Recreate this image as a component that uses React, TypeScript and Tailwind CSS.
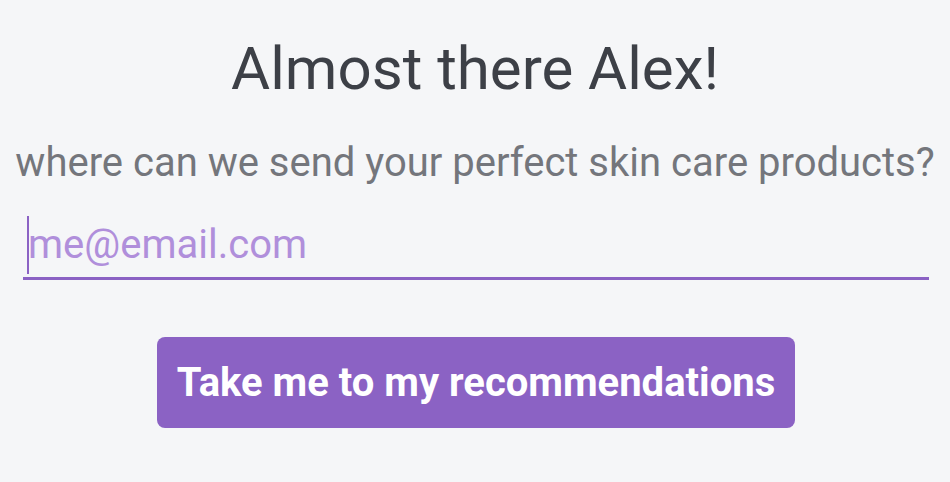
export default function App() {
  return (
    <div
      className="min-h-[482px] bg-[#f5f6f8] flex flex-col items-center pt-[33px]"
      style={{ fontFamily: "Roboto, 'Liberation Sans', sans-serif" }}
    >
      <h1 className="text-[60px] leading-[72px] text-[#3d4047]">Almost there Alex!</h1>
      <p className="mt-[34px] text-[40px] leading-[48px] text-[#74767c] whitespace-nowrap">
        where can we send your perfect skin care products?
      </p>
      <div className="mt-[26px] w-[906px] ml-[2px] border-b-[3px] border-[#8b62c4] flex items-center h-[67px] relative">
        <span className="absolute left-[4px] top-[3px] w-[2px] h-[58px] bg-[#8b62c4]" />
        <input
          type="email"
          placeholder="me@email.com"
          className="w-full bg-transparent outline-none pl-[5px] text-[40px] text-[#3d4047] placeholder:text-[#b08fdb]"
        />
      </div>
      <button
        type="button"
        className="mt-[57px] ml-[2px] w-[638px] h-[91px] rounded-[8px] bg-[#8b62c4] text-white text-[40px] font-bold"
      >
        Take me to my recommendations
      </button>
    </div>
  );
}
